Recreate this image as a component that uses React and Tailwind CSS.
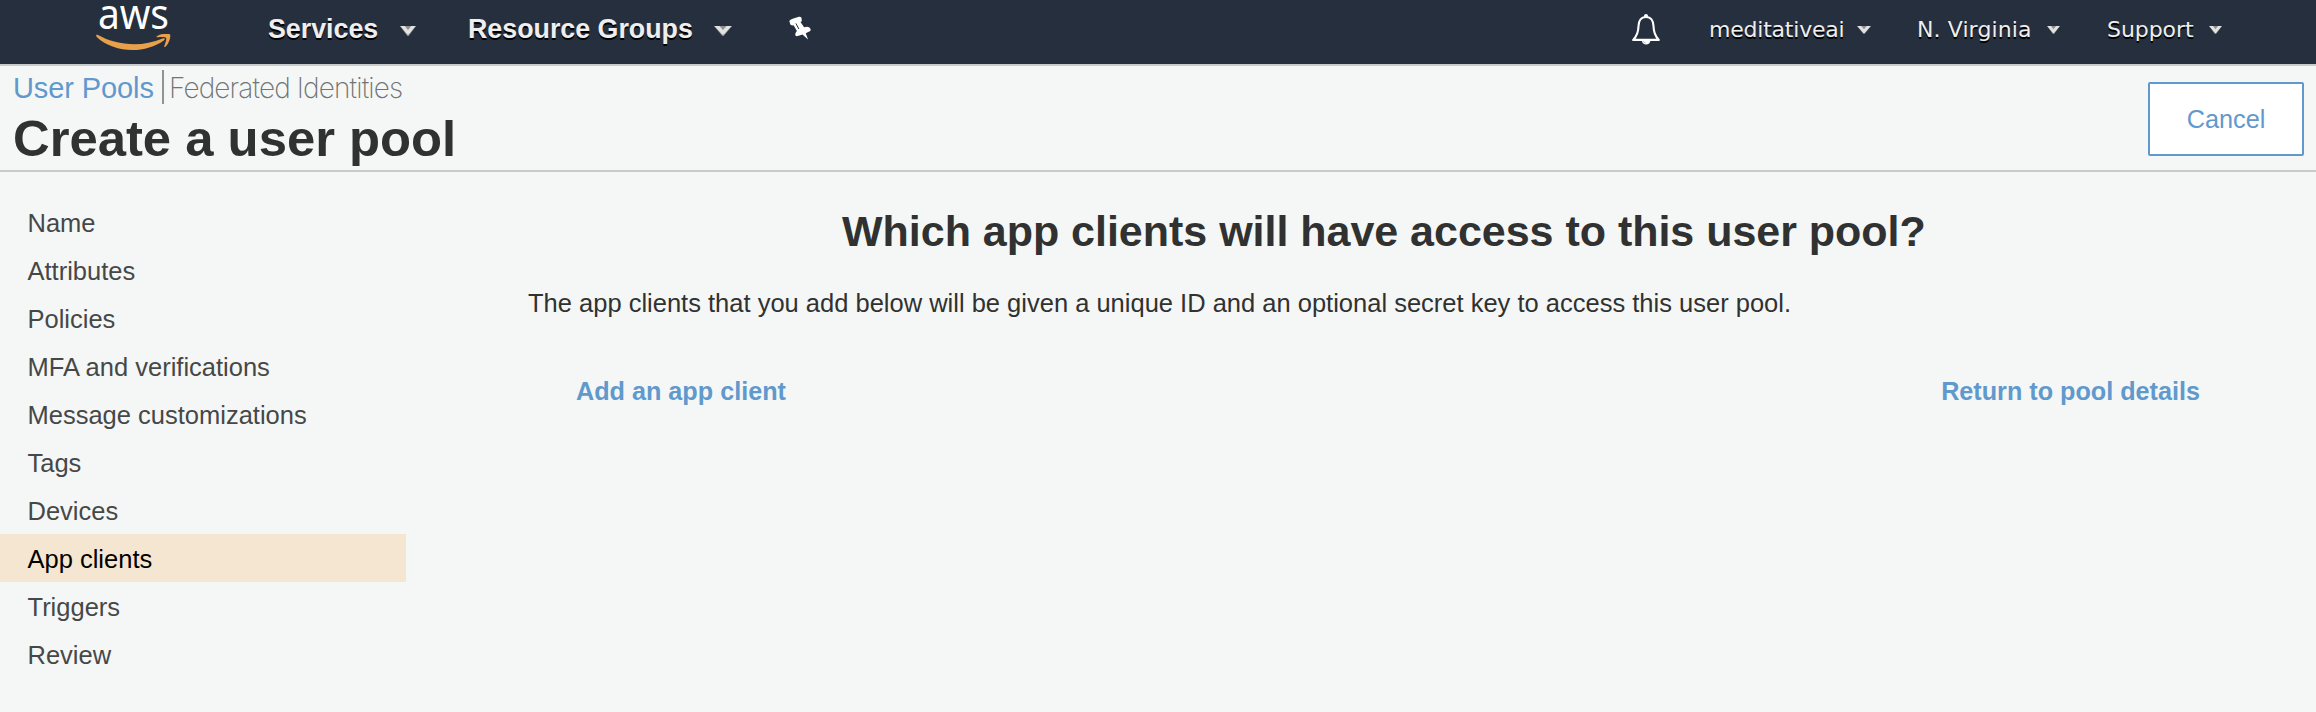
import React from 'react';

const steps = [
  'Name',
  'Attributes',
  'Policies',
  'MFA and verifications',
  'Message customizations',
  'Tags',
  'Devices',
  'App clients',
  'Triggers',
  'Review',
];

function Caret({ className }) {
  return (
    <svg viewBox="0 0 16 10" preserveAspectRatio="none" className={`shrink-0 ${className}`}>
      <path d="M0 0H16L8.6 10H7.4Z" fill="#8d8f92" />
      <path d="M0.300 0H4.800L8 4L11.200 0H15.700L8.700 8.600H7.300Z" fill="#e2e2e0" />
    </svg>
  );
}

function AwsLogo() {
  return (
    <div className="ml-[96px] flex h-[64px] w-[76px] shrink-0 flex-col">
      <span className="h-[34px] origin-left scale-x-[0.95] whitespace-nowrap pl-[2px] font-['Noto_Sans',sans-serif] text-[41px] leading-[27px] text-white">
        aws
      </span>
      <svg viewBox="0 0 76 18" className="h-[18px] w-[76px]">
        <path
          d="M0.4 0.9C-0.2 1.8 0.2 2.6 1.2 3.5C10.500 11.700 23 16 36.500 16C47.500 16 59.500 12.500 67.800 6.400C69.600 5.100 68.600 3.600 66.600 4.400C57.500 8.200 47.500 10.300 38.500 10.300C25 10.300 12.500 6.900 2 1.100C1.400 0.700 0.800 0.500 0.400 0.900Z"
          fill="#e9a04b"
        />
        <path
          d="M60.800 2.300C64.500 -0.500 73 -0.900 74 0.500C75 2 73.500 9.300 69.500 12.800C68.700 13.400 67.900 13 68.300 12.100C69.300 9.600 70.900 4.900 70 3.700C69 2.500 64.500 3 62 3.300C60.800 3.500 60 2.900 60.800 2.300Z"
          fill="#e9a04b"
        />
      </svg>
    </div>
  );
}

function PinIcon() {
  return (
    <svg viewBox="56 32 70 72" className="mt-[16px] ml-[57px] h-[24px] w-[23px] shrink-0">
      <path
        d="M57 47Q59 43 67 40L86 34Q92 33 94 37L95 46Q95 49 91 50L102 66Q112 62 119 67Q124 71 121 77Q115 80 107 84L114 103L97 88Q88 92 79 93Q74 92 75 86Q76 81 80 77L70 60Q64 61 60 57Z"
        fill="#fff"
      />
      <path d="M77 54L86 71" stroke="#262f3e" strokeWidth="3" />
    </svg>
  );
}

function BellIcon() {
  return (
    <svg viewBox="0 0 28 31" className="mt-[14px] h-[31px] w-[28px] shrink-0" fill="none">
      <circle cx="14" cy="2" r="2" fill="#fff" />
      <path
        d="M14 3C9 3 6.600 7 6.500 12C6.400 18 4.500 22.500 1.200 25.900H26.800C23.500 22.500 21.600 18 21.500 12C21.400 7 19 3 14 3Z"
        stroke="#fff"
        strokeWidth="2.1"
        strokeLinejoin="round"
      />
      <path d="M9.800 26.500H18.500C18.200 29 16.400 30.400 14.200 30.400C11.900 30.400 10.100 29 9.800 26.500Z" fill="#fff" />
      <path d="M11.400 27.200Q12 28.800 13.600 29" stroke="#9aa0a8" strokeWidth="0.8" />
    </svg>
  );
}

export default function App() {
  return (
    <div className="flex h-[712px] w-[2316px] flex-col overflow-hidden bg-[#f5f7f6] font-['Liberation_Sans',Arial,sans-serif]">
      <nav className="flex h-[66px] shrink-0 items-start border-b-2 border-[#c8cbcc] bg-[#262f3e] whitespace-nowrap">
        <AwsLogo />
        <div className="ml-[96px] flex text-[26.800px] leading-[58px] font-bold text-[#eeeeee] [text-shadow:0_2px_0_#000]">
          <span className="w-[132px]">Services</span>
          <Caret className="mt-[26px] h-[10px] w-[16px]" />
          <span className="ml-[52px] w-[246px]">Resource Groups</span>
          <Caret className="mt-[26px] h-[10px] w-[18px]" />
        </div>
        <PinIcon />
        <div className="ml-auto flex pr-[94px] font-['DejaVu_Sans',Verdana,sans-serif] text-[22px] leading-[60px] text-[#eeeeee] [text-shadow:0_2px_0_#000]">
          <BellIcon />
          <span className="ml-[49px] w-[148px] tracking-[-0.220px]">meditativeai</span>
          <Caret className="mt-[26px] h-[8px] w-[14px]" />
          <span className="ml-[46px] w-[130px] tracking-[0.100px]">N. Virginia</span>
          <Caret className="mt-[26px] h-[8px] w-[13px]" />
          <span className="ml-[47px] w-[102px] tracking-[-0.060px]">Support</span>
          <Caret className="mt-[26px] h-[8px] w-[13px]" />
        </div>
      </nav>

      <header className="flex h-[106px] shrink-0 items-start justify-between border-b-2 border-[#c8cbcb] pr-[12px] pl-[13px] whitespace-nowrap">
        <div className="flex flex-col">
          <div className="flex h-[38px] pt-[4px]">
            <a className="w-[149px] text-[29px] leading-[36px] tracking-[-0.100px] text-[#6199cd]">User Pools</a>
            <span className="h-[34px] w-[2px] bg-[#8f9393]" />
            <a className="ml-[5px] font-['Inter',sans-serif] text-[28px] leading-[36px] font-extralight tracking-[-0.880px] text-[#707474]">
              Federated Identities
            </a>
          </div>
          <h1 className="text-[50.800px] leading-[69px] font-bold text-[#303231]">Create a user pool</h1>
        </div>
        <button className="mt-[16px] h-[74px] w-[156px] rounded-[2px] border-2 border-[#6199cd] bg-white text-[25.300px] leading-[68px] text-[#6199cd]">
          Cancel
        </button>
      </header>

      <div className="flex grow">
        <aside className="w-[406px] shrink-0 pt-[26px]">
          <ul>
            {steps.map((step) => (
              <li
                key={step}
                className={`h-[48px] pl-[27.500px] text-[25.500px] leading-[50px] ${
                  step === 'App clients' ? 'bg-[#f5e6d2] text-black' : 'text-[#464848]'
                }`}
              >
                {step}
              </li>
            ))}
          </ul>
        </aside>
        <main className="flex grow flex-col pt-[29px] pr-[70px] pl-[122px] whitespace-nowrap">
          <h2 className="pl-[314px] text-[43px] leading-[60px] font-bold tracking-[-0.020px] text-[#303231]">
            Which app clients will have access to this user pool?
          </h2>
          <p className="mt-[22px] text-[25.500px] leading-[40px] text-[#303231]">
            The app clients that you add below will be given a unique ID and an optional secret key to access this user
            pool.
          </p>
          <div className="mt-[48px] flex justify-between pr-[46px] pl-[48px] text-[25.200px] leading-[40px] font-bold text-[#6199cd]">
            <a>Add an app client</a>
            <a>Return to pool details</a>
          </div>
        </main>
      </div>
    </div>
  );
}
